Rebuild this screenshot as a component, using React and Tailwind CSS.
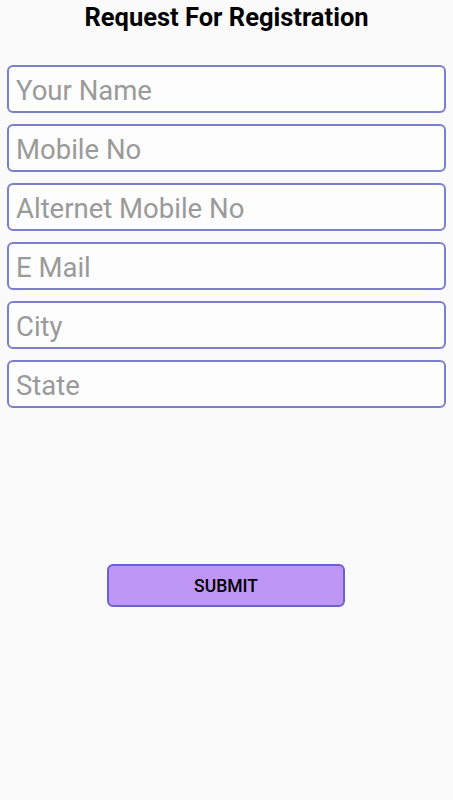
export default function App() {
  const fields = ["Your Name", "Mobile No", "Alternet Mobile No", "E Mail", "City", "State"];
  return (
    <div className="min-h-[800px] w-full bg-[#fafafa] font-['Roboto',sans-serif]">
      <h1 className="pt-[2px] text-center text-[25.5px] font-bold leading-[30px] text-black">
        Request For Registration
      </h1>
      <div className="mt-[33px] flex flex-col gap-[11px] px-[7px]">
        {fields.map((f) => (
          <input
            key={f}
            placeholder={f}
            className="h-[48px] w-full rounded-[6px] border-2 border-[#7b7fcc] bg-[#fdfdfd] px-[7px] pt-[3px] text-[27.5px] text-black placeholder:text-[#9a9a9a] outline-none"
          />
        ))}
      </div>
      <div className="mt-[156px] flex justify-center">
        <button className="ml-[-1px] h-[43px] w-[238px] rounded-[6px] border-2 border-[#6a62cf] bg-[#bf95f5] pt-[2px] text-[17.5px] font-medium text-black">
          SUBMIT
        </button>
      </div>
    </div>
  );
}
